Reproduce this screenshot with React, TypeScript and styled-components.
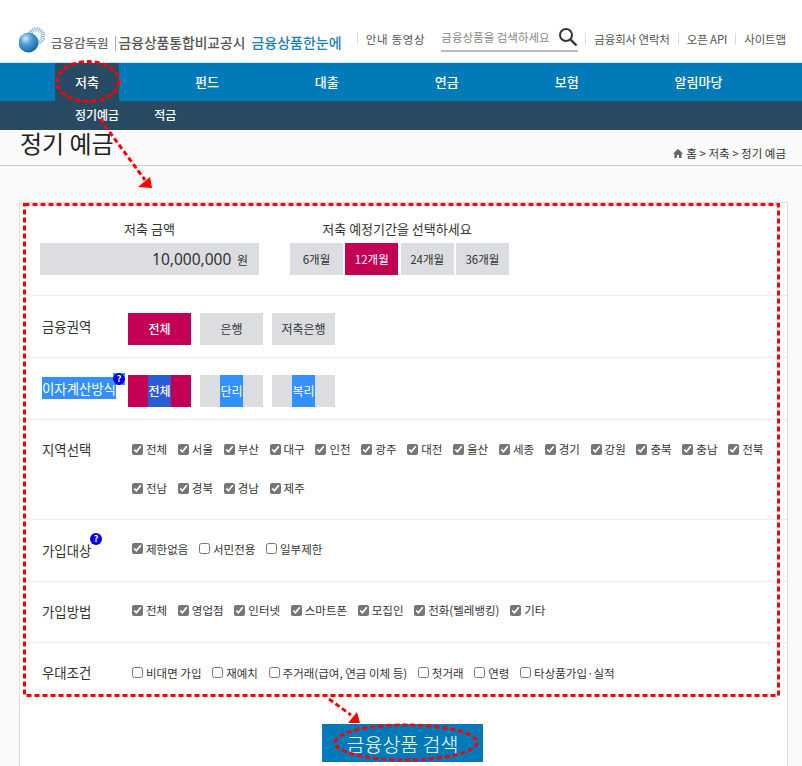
import React from "react";
import styled, { createGlobalStyle } from "styled-components";

const GlobalStyle = createGlobalStyle`
  html, body {
    margin: 0;
    padding: 0;
    background: #fafafa;
  }
  body {
    font-family: "Noto Sans CJK KR", "Noto Sans", sans-serif;
    color: #333;
  }
`;

const topLinks = ["금융회사 연락처", "오픈 API", "사이트맵"];
const navItems = ["저축", "펀드", "대출", "연금", "보험", "알림마당"];
const regions = [
  "전체", "서울", "부산", "대구", "인천", "광주", "대전", "울산", "세종", "경기",
  "강원", "충북", "충남", "전북", "전남", "경북", "경남", "제주",
];
const targets = [
  { name: "제한없음", checked: true },
  { name: "서민전용", checked: false },
  { name: "일부제한", checked: false },
];
const methods = ["전체", "영업점", "인터넷", "스마트폰", "모집인", "전화(텔레뱅킹)", "기타"];
const benefits = ["비대면 가입", "재예치", "주거래(급여, 연금 이체 등)", "첫거래", "연령", "타상품가입·실적"];

function App() {
  return (
    <Page>
      <GlobalStyle />
      <Header>
        <Logo>
          <svg width="26" height="26" viewBox="0 0 26 26">
            <defs>
              <radialGradient id="ball" cx="0.36" cy="0.3" r="0.8">
                <stop offset="0" stopColor="#cfe8f8" />
                <stop offset="0.4" stopColor="#4a9bd4" />
                <stop offset="1" stopColor="#0b5c9c" />
              </radialGradient>
            </defs>
            <circle cx="17.5" cy="9" r="6.5" fill="none" stroke="#7fb4da" strokeWidth="4" strokeDasharray="1 1" />
            <circle cx="17.5" cy="9" r="8.5" fill="none" stroke="#a9cde6" strokeWidth="0.8" />
            <circle cx="9.5" cy="15.5" r="10" fill="url(#ball)" />
          </svg>
        </Logo>
        <OrgName>금융감독원</OrgName>
        <TitleDivider />
        <ServiceName>금융상품통합비교공시</ServiceName>
        <BrandName>금융상품한눈에</BrandName>
        <TopLink $wide>안내 동영상</TopLink>
        <SearchBox>
          <SearchText>금융상품을 검색하세요</SearchText>
          <svg width="20" height="20" viewBox="0 0 20 20">
            <circle cx="8" cy="8" r="6" fill="none" stroke="#333" strokeWidth="2" />
            <path d="M12.5 12.5 L18.5 18.5" stroke="#333" strokeWidth="2.4" />
          </svg>
        </SearchBox>
        {topLinks.map((link) => (
          <TopLink key={link}>{link}</TopLink>
        ))}
      </Header>

      <MainNav>
        {navItems.map((item, i) => (
          <NavItem key={item} $active={i === 0}>{item}</NavItem>
        ))}
      </MainNav>
      <SubNav>
        <span>정기예금</span>
        <span>적금</span>
      </SubNav>

      <TitleBand>
        <h1>정기 예금</h1>
        <Breadcrumb>
          <svg width="10" height="9" viewBox="0 0 10 9">
            <path d="M5 0 L10 4.5 H8.6 V9 H6 V6 H4 V9 H1.4 V4.5 H0 Z" fill="#666" />
          </svg>
          <span>홈 &gt; 저축 &gt; 정기 예금</span>
        </Breadcrumb>
      </TitleBand>

      <Card>
        <AmountRow>
          <AmountColumn>
            <FieldTitle>저축 금액</FieldTitle>
            <AmountBox>
              <strong>10,000,000</strong> 원
            </AmountBox>
          </AmountColumn>
          <PeriodColumn>
            <PeriodTitle>저축 예정기간을 선택하세요</PeriodTitle>
            <PeriodButtons>
              <PeriodButton>6개월</PeriodButton>
              <PeriodButton $active>12개월</PeriodButton>
              <PeriodButton>24개월</PeriodButton>
              <PeriodButton>36개월</PeriodButton>
            </PeriodButtons>
          </PeriodColumn>
        </AmountRow>

        <Row>
          <RowLabel>금융권역</RowLabel>
          <ChoiceGroup>
            <Choice $active>전체</Choice>
            <Choice>은행</Choice>
            <Choice>저축은행</Choice>
          </ChoiceGroup>
        </Row>

        <Row>
          <RowLabel>
            <Selected>이자계산방식</Selected>
            <HelpBadge $x={71} $y={-6} $selected>?</HelpBadge>
          </RowLabel>
          <ChoiceGroup>
            <Choice $active><SelectedChoice $dark>전체</SelectedChoice></Choice>
            <Choice><SelectedChoice>단리</SelectedChoice></Choice>
            <Choice><SelectedChoice>복리</SelectedChoice></Choice>
          </ChoiceGroup>
        </Row>

        <RegionRow>
          <RowLabel>지역선택</RowLabel>
          <RegionGrid>
            {regions.map((name) => (
              <Check key={name}>
                <input type="checkbox" defaultChecked />
                {name}
              </Check>
            ))}
          </RegionGrid>
        </RegionRow>

        <Row>
          <RowLabel>
            가입대상
            <HelpBadge $x={48} $y={-8}>?</HelpBadge>
          </RowLabel>
          <CheckRow>
            {targets.map((t) => (
              <Check key={t.name}>
                <input type="checkbox" defaultChecked={t.checked} />
                {t.name}
              </Check>
            ))}
          </CheckRow>
        </Row>

        <MethodRow>
          <RowLabel>가입방법</RowLabel>
          <CheckRow>
            {methods.map((name) => (
              <Check key={name}>
                <input type="checkbox" defaultChecked />
                {name}
              </Check>
            ))}
          </CheckRow>
        </MethodRow>

        <LastRow>
          <LastLabel>우대조건</LastLabel>
          <CheckRow>
            {benefits.map((name) => (
              <Check key={name}>
                <input type="checkbox" />
                {name}
              </Check>
            ))}
          </CheckRow>
        </LastRow>

        <SearchButton>금융상품 검색</SearchButton>
      </Card>

      <Annotations width="802" height="766" viewBox="0 0 802 766">
        <g fill="none" stroke="#f00" strokeWidth="3" strokeDasharray="5 3">
          <ellipse cx="88" cy="81.5" rx="31" ry="20" />
          <path d="M100 119 L145 180" />
          <rect x="24.5" y="204.5" width="754" height="491" />
          <path d="M329 699 L351 715" />
          <ellipse cx="406" cy="742.5" rx="71" ry="17.5" />
        </g>
        <path d="M152 188 L138 187 L150 177 Z" fill="#f00" />
        <path d="M348 723 L360 723 L357 712 Z" fill="#f00" />
      </Annotations>
    </Page>
  );
}

export default App;

const Page = styled.div`
  position: relative;
  width: 802px;
  height: 766px;
  overflow: hidden;
`;

const Header = styled.header`
  height: 62px;
  background: #fff;
  border-bottom: 1px solid #cfe3ee;
  padding-left: 19px;
  display: flex;
  align-items: center;
  font-size: 12px;
  color: #555;
  white-space: nowrap;
`;

const Logo = styled.div`
  width: 26px;
  height: 26px;
  margin: 18px 6px 0 0;
`;

const OrgName = styled.span`
  margin-top: 22px;
  font-size: 12.5px;
  font-weight: 500;
  color: #666;
`;

const TitleDivider = styled.i`
  width: 1px;
  height: 15px;
  background: #aaa;
  margin: 24px 3px 0 6px;
`;

const ServiceName = styled.span`
  margin-top: 22px;
  font-size: 13.8px;
  font-weight: 500;
  color: #555;
`;

const BrandName = styled.span`
  margin: 22px 15px 0 6px;
  font-size: 14px;
  font-weight: 500;
  color: #1b7fb4;
`;

const TopLink = styled.span<{ $wide?: boolean }>`
  margin-top: 16px;
  padding: 0 8px;
  font-size: 11.5px;
  line-height: 12px;
  letter-spacing: ${(p) => (p.$wide ? "0.7px" : "-0.15px")};
  border-left: 1px solid #ddd;
`;

const SearchBox = styled.div`
  width: 137px;
  height: 26px;
  margin: 14px 7px 0 8px;
  border-bottom: 2px solid #bbb;
  display: flex;
  align-items: center;
  justify-content: space-between;
`;

const SearchText = styled.span`
  font-size: 11.5px;
  color: #888;
`;

const MainNav = styled.nav`
  height: 38px;
  padding-left: 55px;
  background: #007ab9;
  display: flex;
  gap: 56px;
`;

const NavItem = styled.a<{ $active?: boolean }>`
  padding: 0 20px;
  line-height: 37px;
  font-size: 13px;
  font-weight: 500;
  color: #fff;
  background: ${(p) => (p.$active ? "#294a63" : "transparent")};
`;

const SubNav = styled.div`
  height: 27px;
  padding: 0 0 2px 75px;
  background: #294a63;
  color: #fff;
  display: flex;
  gap: 35px;
  align-items: center;
  font-size: 12px;
  font-weight: 500;
`;

const TitleBand = styled.div`
  height: 35px;
  border-bottom: 1px solid #ccc;
  padding: 0 16px 0 20px;
  display: flex;
  justify-content: space-between;

  h1 {
    margin: 0;
    font-size: 24px;
    line-height: 26px;
    font-weight: 400;
    color: #222;
  }
`;

const Breadcrumb = styled.div`
  display: flex;
  align-items: center;
  gap: 3px;
  margin-top: 14px;
  height: 18px;
  font-size: 11.5px;
  color: #333;
`;

const Card = styled.main`
  width: 767px;
  height: 620px;
  margin: 36px 0 0 19px;
  background: #fff;
  border: 1px solid #ddd;
`;

const AmountRow = styled.section`
  height: 93px;
  padding: 18px 0 0 20px;
  box-sizing: border-box;
  display: flex;
  gap: 31px;
  border-bottom: 1px dotted #ddd;
`;

const AmountColumn = styled.div`
  width: 219px;
`;

const PeriodColumn = styled.div`
  width: 219px;
`;

const FieldTitle = styled.div`
  height: 22px;
  font-size: 13px;
  line-height: 16px;
  text-align: center;
  white-space: nowrap;
  color: #333;
`;

const PeriodTitle = styled(FieldTitle)`
  padding-right: 5px;
`;

const AmountBox = styled.div`
  height: 32px;
  padding-right: 11px;
  background: #dcdde1;
  text-align: right;
  line-height: 32px;
  font-size: 12px;

  strong {
    font-family: "Noto Sans", sans-serif;
    font-size: 15.5px;
    font-weight: 400;
    margin-right: 3px;
  }
`;

const PeriodButtons = styled.div`
  display: flex;
  gap: 2.3px;
`;

const PeriodButton = styled.button<{ $active?: boolean }>`
  width: 53px;
  height: 32px;
  padding: 0;
  border: 0;
  font: inherit;
  font-size: 11.5px;
  color: ${(p) => (p.$active ? "#fff" : "#333")};
  background: ${(p) => (p.$active ? "#c40055" : "#dcdde1")};
`;

const Row = styled.section`
  height: 62px;
  padding-left: 22px;
  box-sizing: border-box;
  display: flex;
  align-items: center;
  border-bottom: 1px dotted #ddd;
`;

const MethodRow = styled(Row)`
  height: 61px;
`;

const LastRow = styled(Row)`
  height: 81px;
  padding-bottom: 18px;
  border-bottom: 0;
`;

const RegionRow = styled(Row)`
  height: 100px;
  align-items: flex-start;
  padding-top: 20px;
`;

const RowLabel = styled.div`
  position: relative;
  width: 86px;
  flex: none;
  margin-bottom: 2px;
  font-size: 13.4px;
  line-height: 18px;
  color: #333;
`;

const LastLabel = styled(RowLabel)`
  margin-bottom: 6px;
`;

const Selected = styled.span`
  background: #3390ff;
  color: #fff;
  padding: 1px 0;
`;

const HelpBadge = styled.b<{ $x: number; $y: number; $selected?: boolean }>`
  position: absolute;
  left: ${(p) => p.$x}px;
  top: ${(p) => p.$y}px;
  width: 12px;
  height: 12px;
  border-radius: ${(p) => (p.$selected ? "0" : "50%")};
  background: ${(p) =>
    p.$selected ? "radial-gradient(circle, #0000f0 5.5px, #3390ff 6px)" : "#0000f0"};
  color: #fff;
  font-size: 9px;
  line-height: 12px;
  text-align: center;
`;

const ChoiceGroup = styled.div`
  display: flex;
  gap: 9px;
  margin-top: 5px;
`;

const Choice = styled.div<{ $active?: boolean }>`
  width: 63px;
  height: 32px;
  display: flex;
  justify-content: center;
  font-size: 12px;
  line-height: 32px;
  color: ${(p) => (p.$active ? "#fff" : "#333")};
  font-weight: ${(p) => (p.$active ? 500 : 400)};
  background: ${(p) => (p.$active ? "#c40055" : "#dcdde1")};
`;

const SelectedChoice = styled.span<{ $dark?: boolean }>`
  padding: 0;
  color: #fff;
  background: ${(p) => (p.$dark ? "#2b5bd7" : "#3390ff")};
`;

const RegionGrid = styled.div`
  display: flex;
  flex-wrap: wrap;
  gap: 21px 10.7px;
  width: 650px;
  margin-left: 4px;
`;

const CheckRow = styled.div`
  display: flex;
  gap: 10.7px;
  margin: 0 0 4px 4px;
  white-space: nowrap;
`;

const Check = styled.label`
  display: flex;
  align-items: center;
  gap: 3px;
  height: 18px;
  font-size: 11.5px;
  color: #333;

  input {
    width: 11px;
    height: 11px;
    margin: 0;
    accent-color: #767676;
  }
`;

const SearchButton = styled.button`
  display: block;
  width: 161px;
  height: 38px;
  margin: 0 0 0 302px;
  padding: 0;
  border: 0;
  background: #007ab9;
  color: #fff;
  font: inherit;
  font-size: 19.5px;
  font-weight: 300;
`;

const Annotations = styled.svg`
  position: absolute;
  left: 0;
  top: 0;
  pointer-events: none;
`;
